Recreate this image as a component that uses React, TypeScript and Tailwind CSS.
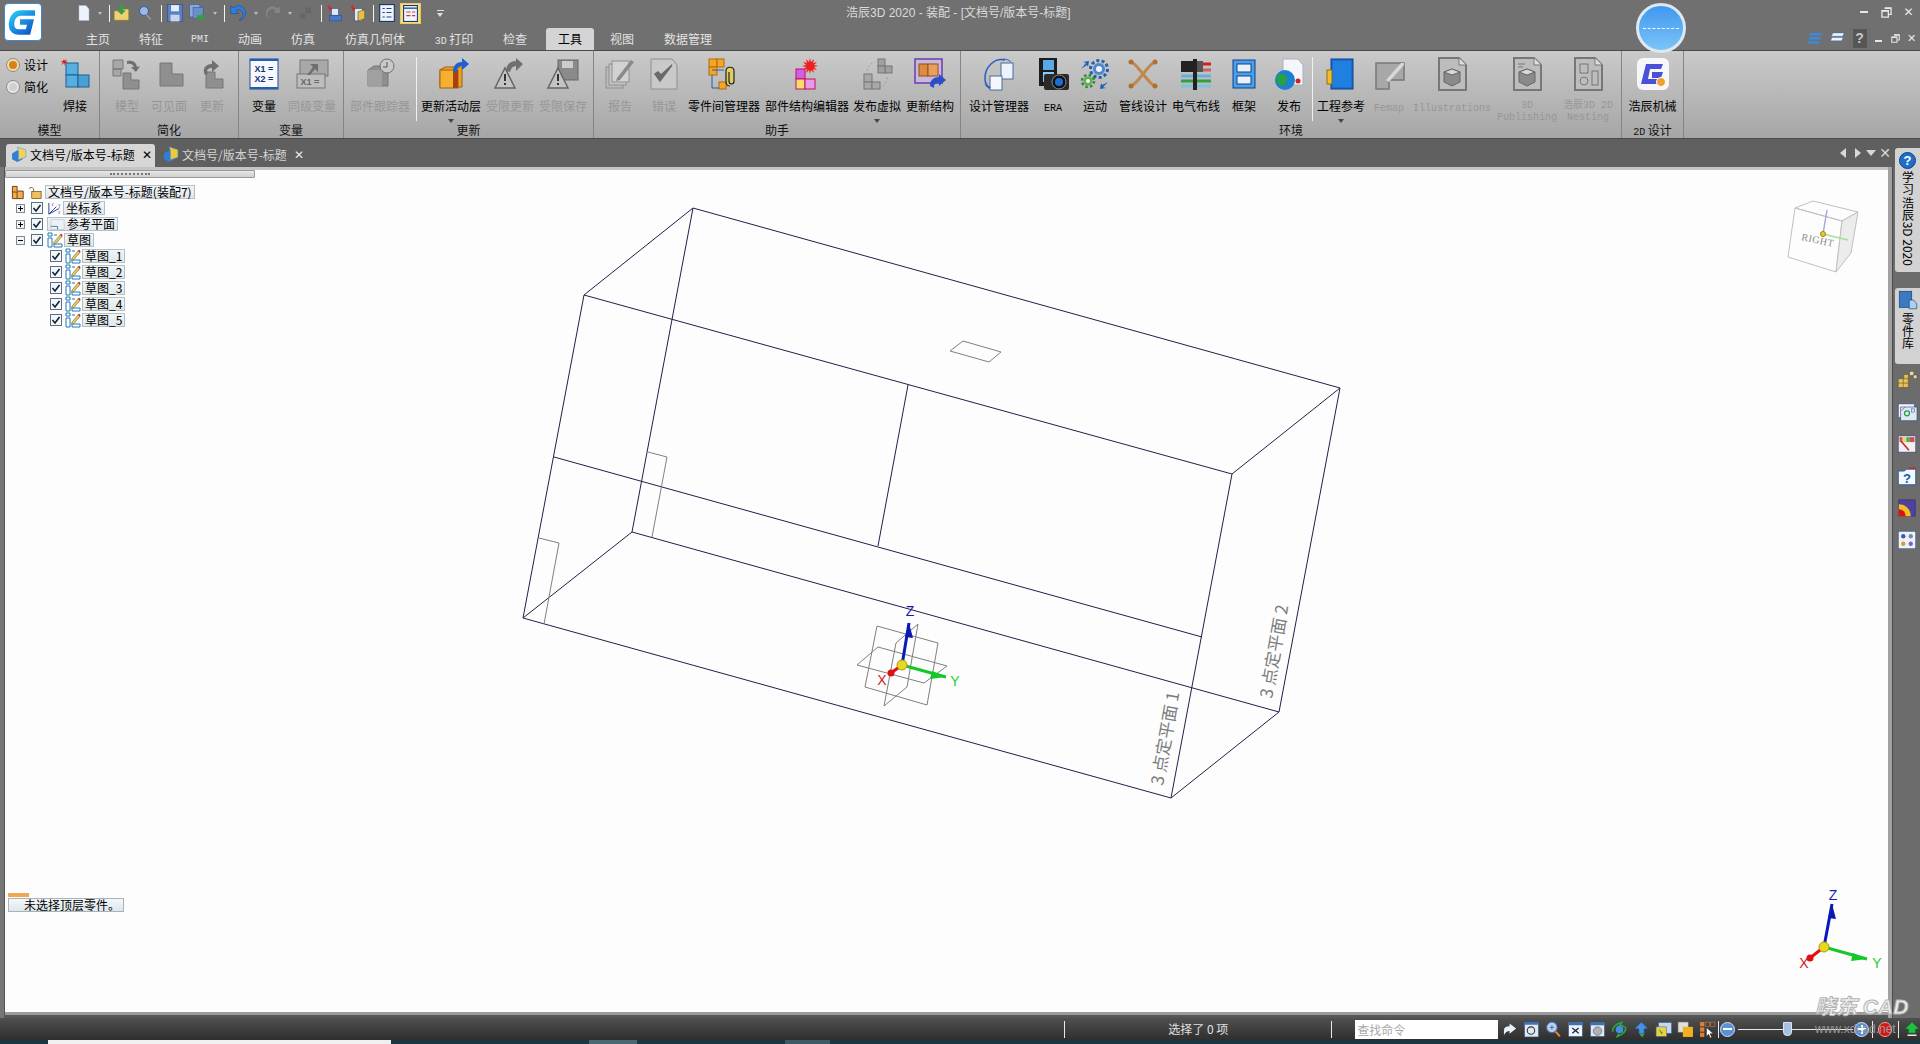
import React from 'react';

const CJK = "font-['Noto_Sans_CJK_SC',sans-serif]";
const LATIN = "font-['Liberation_Mono','Noto_Sans_CJK_SC',monospace]";

const I: React.FC<{ s?: number; children: React.ReactNode }> = ({ s = 32, children }) => (
  <svg width={s} height={s} viewBox="0 0 32 32" className="shrink-0 overflow-visible">{children}</svg>
);

const G1 = '#8f8f8f';
const G2 = '#777777';

/* ribbon icons */
const Weld = () => (
  <I>
    <path d="M5 1l1 2 2-2-1 3 2 1-3 0 0 3-1-3-3 2 2-3-3-1 3 0z" fill="#e01818" />
    <rect x="7" y="5" width="12" height="12" fill="#58aee0" stroke="#1a5f95" />
    <rect x="7" y="17" width="12" height="12" fill="#58aee0" stroke="#1a5f95" />
    <rect x="19" y="17" width="11" height="12" fill="#4a9fd4" stroke="#1a5f95" />
  </I>
);
const ModelI = () => (
  <I>
    <path d="M2 2h10v9h-10zM2 11h8v7h-8z" fill="#a8a8a8" stroke={G2} />
    <path d="M12 15h8v7h8v9h-16z" fill={G1} stroke={G2} />
    <path d="M16 3c6-1 9 1 10 6l3-1-4 6-5-5 3 0c-1-3-4-4-7-3z" fill="#6f6f6f" />
  </I>
);
const Visible = () => <I><path d="M7 5h12v11h11v12H7z" fill={G1} stroke={G2} /></I>;
const UpdateI = () => (
  <I>
    <path d="M10 14h9v7h8v9H10z" fill={G1} stroke={G2} />
    <path d="M9 17c-3-6 0-11 7-11V2l7 6-7 6v-4c-4 0-6 2-4 6z" fill="#6f6f6f" />
  </I>
);
const Variable = () => (
  <I>
    <rect x="2" y="1" width="28" height="30" fill="#f7f9fd" stroke="#1f4f9a" />
    <rect x="2" y="1" width="28" height="2" fill="#1f5fb0" />
    <rect x="2" y="29" width="28" height="2" fill="#1f5fb0" />
    <text x="16" y="14" textAnchor="middle" fontSize="9" fontWeight="bold" fill="#12327a" fontFamily="Liberation Sans">X1 =</text>
    <text x="16" y="24" textAnchor="middle" fontSize="9" fontWeight="bold" fill="#12327a" fontFamily="Liberation Sans">X2 =</text>
  </I>
);
const Sibling = () => (
  <I>
    <rect x="4" y="2" width="28" height="16" fill="#a8a8a8" stroke={G2} />
    <rect x="1" y="16" width="28" height="14" fill="#bdbdbd" stroke={G2} />
    <path d="M14 6h8v8l-3-3-5 6h-3l6-8z" fill="#6f6f6f" />
    <text x="14" y="27" textAnchor="middle" fontSize="9" fontWeight="bold" fill="#666" fontFamily="Liberation Sans">X1 =</text>
  </I>
);
const Tracker = () => (
  <I>
    <path d="M4 12l6-4h14v20H4z" fill={G1} stroke={G2} />
    <path d="M4 12h14v17H4z" fill="#a0a0a0" />
    <circle cx="23" cy="8" r="7" fill="#c9c9c9" stroke="#6f6f6f" />
    <path d="M23 4v5h-4" stroke="#555" fill="none" />
  </I>
);
const ActiveLayer = () => (
  <I>
    <path d="M5 12l5-3h17v20H5z" fill="#f0a020" stroke="#a06010" />
    <rect x="5" y="12" width="18" height="18" fill="#f6b030" stroke="#a06010" />
    <rect x="18" y="12" width="5" height="18" fill="#a84010" />
    <path d="M18 14c0-7 4-10 9-10V0l7 6-7 6V8c-3 0-5 2-5 6z" fill="#1f5fd0" />
  </I>
);
const Warn = ({ save }: { save?: boolean }) => (
  <I>
    {save ? (
      <g><rect x="11" y="2" width="20" height="20" fill="#8a8a8a" stroke="#666" /><rect x="15" y="3" width="11" height="7" fill="#ccc" /></g>
    ) : (
      <path d="M12 13c0-6 4-10 10-10V0l7 6-7 7V8c-3 0-5 2-6 6z" fill="#707070" />
    )}
    <path d="M11 10L21 30H1z" fill="#c4c4c4" stroke="#666" strokeWidth="1.5" />
    <rect x="10" y="16" width="2" height="7" fill="#333" />
    <rect x="10" y="25" width="2" height="2" fill="#333" />
  </I>
);
const Report = () => (
  <I>
    <rect x="2" y="9" width="17" height="21" fill="#bbb" stroke={G1} />
    <rect x="5" y="6" width="17" height="21" fill="#c6c6c6" stroke={G1} />
    <rect x="8" y="3" width="17" height="21" fill="#d2d2d2" stroke={G1} />
    <path d="M13 20l14-18 3 2-14 18-4 1z" fill="#8a8a8a" />
  </I>
);
const ErrorI = () => (
  <I>
    <path d="M3 1h21l5 6v24H3z" fill="#c9c9c9" stroke={G1} />
    <path d="M7 16l5 7 12-16-11 10-3-3z" fill="#6a6a6a" stroke="#6a6a6a" strokeWidth="1.5" />
  </I>
);
const PartMgr = () => (
  <I>
    <rect x="1" y="1" width="8" height="8" fill="#f5a623" stroke="#b06a10" />
    <rect x="9" y="1" width="7" height="8" fill="#f5a623" stroke="#b06a10" />
    <rect x="1" y="9" width="8" height="8" fill="#f5a623" stroke="#b06a10" />
    <rect x="11" y="24" width="7" height="7" fill="#f5a623" stroke="#b06a10" />
    <path d="M4 17v13h7M4 12h12" stroke="#1f5fb0" fill="none" />
    <path d="M22 28c-4 0-4-3-4-6v-9c0-5 8-5 8 0v10c0 4-5 4-5 0v-9" stroke="#222" strokeWidth="1.2" fill="#ead33a" fillOpacity=".75" />
  </I>
);
const Editor = () => (
  <I>
    <rect x="5" y="11" width="9" height="10" fill="#d05ee8" stroke="#c01060" />
    <rect x="5" y="21" width="9" height="10" fill="#f7e06a" stroke="#c01060" />
    <rect x="14" y="21" width="10" height="10" fill="#e89ae8" stroke="#c01060" />
    <path d="M19 0l1 4 3-3-1 4 4-1-3 3 4 1-4 1 3 3-4-1 1 4-3-3-1 4-1-4-3 3 1-4-4 1 3-3-4-1 4-1-3-3 4 1-1-4 3 3z" fill="#f02020" />
  </I>
);
const PublishVirtual = () => (
  <I>
    <rect x="17" y="1" width="7" height="7" fill="#a0a0a0" stroke={G2} />
    <rect x="24" y="8" width="7" height="7" fill="#a0a0a0" stroke={G2} />
    <rect x="17" y="8" width="7" height="7" fill="#a0a0a0" stroke={G2} />
    <rect x="3" y="16" width="8" height="8" fill="#a8a8a8" stroke={G2} />
    <rect x="3" y="24" width="8" height="7" fill="#a8a8a8" stroke={G2} />
    <rect x="11" y="24" width="8" height="7" fill="#a8a8a8" stroke={G2} />
    <path d="M6 13c1-5 4-8 8-9M26 19c0 5-2 8-5 10" stroke="#a0a0a0" strokeDasharray="2 2" fill="none" />
  </I>
);
const UpdateStruct = () => (
  <I>
    <rect x="1" y="1" width="27" height="24" fill="#c9b9d9" stroke="#6a3cb0" strokeWidth="1.5" />
    <rect x="5" y="6" width="9" height="12" fill="#e08a40" stroke="#905020" />
    <rect x="14" y="6" width="10" height="12" fill="#e8a060" stroke="#905020" />
    <path d="M16 28c0-6 4-9 9-9v-3l7 6-7 6v-3c-3 0-5 0-5 5z" fill="#2a50c8" />
  </I>
);
const DesignMgr = () => (
  <I>
    <rect x="18" y="5" width="12" height="16" fill="#eef3fb" stroke="#4a6a9a" />
    <rect x="7" y="18" width="12" height="14" fill="#f4f7fc" stroke="#4a6a9a" />
    <path d="M22 2C12-1 1 9 2 22c0 3 2 5 3 7" stroke="#2a5fc0" strokeWidth="1.5" fill="none" />
    <path d="M20 1c3 0 6 1 8 3" stroke="#2a5fc0" fill="none" />
    <path d="M1 26l7 3-2 2z" fill="#2a5fc0" />
  </I>
);
const Era = () => (
  <I>
    <rect x="2" y="0" width="18" height="28" fill="#1c1c1c" />
    <rect x="6" y="2" width="11" height="10" fill="#5aa8e8" />
    <rect x="6" y="14" width="11" height="10" fill="#8fc8f0" />
    <rect x="7" y="16" width="25" height="16" rx="2" fill="#2a2a2a" />
    <circle cx="22" cy="24" r="7" fill="#111" stroke="#888" />
    <circle cx="22" cy="24" r="4" fill="#1a70d0" />
  </I>
);
const Motion = () => (
  <I>
    <circle cx="20" cy="11" r="8.5" fill="none" stroke="#1f5fb0" strokeWidth="3" strokeDasharray="3 2.3" />
    <circle cx="20" cy="11" r="6" fill="#4f86cc" />
    <circle cx="20" cy="11" r="3" fill="#f0f4fa" />
    <circle cx="9" cy="23" r="6" fill="none" stroke="#2f8a30" strokeWidth="2.5" strokeDasharray="2.5 2.2" />
    <circle cx="9" cy="23" r="4.5" fill="#63ad55" />
    <circle cx="9" cy="23" r="2" fill="#f0f4fa" />
    <path d="M2 11l5-6-3-1 6-1-1 6-1-2zM29 24l-5 5 3 1-6 1 1-6 1 2z" fill="#1f5fb0" />
  </I>
);
const Pipe = () => (
  <I>
    <path d="M4 4C10 5 22 27 28 28M28 4C22 5 10 27 4 28" stroke="#c08850" strokeWidth="3" fill="none" />
    <circle cx="4" cy="4" r="2.5" fill="#b06f30" /><circle cx="28" cy="4" r="2.5" fill="#b06f30" />
    <circle cx="4" cy="28" r="2.5" fill="#b06f30" /><circle cx="28" cy="28" r="2.5" fill="#b06f30" />
  </I>
);
const Electric = () => (
  <I>
    <path d="M1 6h30" stroke="#d02020" strokeWidth="3" />
    <path d="M1 12h30" stroke="#d06060" strokeWidth="3" />
    <path d="M1 18h30" stroke="#60b0e0" strokeWidth="3" />
    <path d="M1 23h30" stroke="#30a040" strokeWidth="3" />
    <path d="M1 28h30" stroke="#80c0e0" strokeWidth="3" />
    <rect x="1" y="3" width="12" height="11" fill="#222" />
    <rect x="13" y="1" width="4" height="31" fill="#222" />
    <rect x="17" y="3" width="6" height="11" fill="#555" />
  </I>
);
const Frame = () => (
  <I>
    <rect x="5" y="2" width="22" height="28" fill="#4aa0e8" stroke="#10408a" />
    <rect x="9" y="6" width="14" height="8" fill="#e8f2fb" stroke="#10408a" />
    <rect x="9" y="18" width="14" height="8" fill="#e8f2fb" stroke="#10408a" />
  </I>
);
const PublishI = () => (
  <I>
    <path d="M10 1h15l5 6v20H10z" fill="#f4f6fa" stroke="#a8b0c0" />
    <circle cx="12" cy="22" r="10" fill="#1c7fd0" />
    <path d="M5 17c4-3 8 0 9 3s-3 9-7 8c-3-3-4-7-2-11z" fill="#2aa040" />
    <circle cx="25" cy="23" r="2.5" fill="#d02020" />
  </I>
);
const EngRef = () => (
  <I>
    <rect x="6" y="1" width="22" height="30" fill="#1c6fd0" stroke="#0c3f8a" />
    <rect x="8" y="3" width="18" height="26" fill="#1f80e0" />
    <rect x="2" y="12" width="5" height="14" fill="#e8c030" stroke="#907010" />
  </I>
);
const Femap = () => (
  <I>
    <path d="M3 5h28v17H16v9H3z" fill="#a8a8a8" stroke={G2} strokeWidth="1.5" />
    <path d="M13 22L28 5h3v2L16 24z" fill="#d8d8d8" />
  </I>
);
const Doc = ({ children }: { children?: React.ReactNode }) => (
  <I>
    <path d="M3 0h20l7 7v25H3z" fill="#bdbdbd" stroke={G2} strokeWidth="2" />
    <path d="M23 0v7h7" fill="#e0e0e0" stroke={G2} />
    {children}
  </I>
);
const Cube3 = (
  <g>
    <path d="M16 11l8 3v10l-8 4-8-4V14z" fill="#8a8a8a" stroke="#666" />
    <path d="M8 14l8 3 8-3-8-3z" fill="#d8d8d8" stroke="#666" />
  </g>
);
const Mech = () => (
  <I>
    <rect x="0" y="0" width="32" height="32" rx="6" fill="#f7f7fb" />
    <path d="M9 6h17l-2 5H13l-2 10h10l-1 5H4z" fill="#4a50d8" />
    <path d="M15 14h11l-2 6h-9z" fill="#4a50d8" />
    <circle cx="24" cy="24" r="4.5" fill="#f0a030" stroke="#fff" />
  </I>
);

type Item = { w: string; label?: React.ReactNode; icon?: React.ReactNode; dim?: boolean; caret?: boolean; sep?: boolean; two?: boolean };

const Mono: React.FC<{ children: React.ReactNode }> = ({ children }) => (
  <span className={`${LATIN} text-[10px]`}>{children}</span>
);

const groups: { w: string; pl: string; label: React.ReactNode; items: Item[]; radio?: boolean }[] = [
  {
    w: 'w-[100px]', pl: 'pl-[55px]', label: '模型', radio: true,
    items: [{ w: 'w-[40px]', label: '焊接', icon: <Weld /> }],
  },
  {
    w: 'w-[139px]', pl: 'pl-[6px]', label: '简化',
    items: [
      { w: 'w-[42px]', label: '模型', icon: <ModelI />, dim: true },
      { w: 'w-[42px]', label: '可见面', icon: <Visible />, dim: true },
      { w: 'w-[44px]', label: '更新', icon: <UpdateI />, dim: true },
    ],
  },
  {
    w: 'w-[105px]', pl: 'pl-[2px]', label: '变量',
    items: [
      { w: 'w-[46px]', label: '变量', icon: <Variable /> },
      { w: 'w-[50px]', label: '同级变量', icon: <Sibling />, dim: true },
    ],
  },
  {
    w: 'w-[250px]', pl: 'pl-0', label: '更新',
    items: [
      { w: 'w-[72px]', label: '部件跟踪器', icon: <Tracker />, dim: true },
      { w: 'w-[2px]', sep: true },
      { w: 'w-[66px]', label: '更新活动层', icon: <ActiveLayer />, caret: true },
      { w: 'w-[52px]', label: '受限更新', icon: <Warn />, dim: true },
      { w: 'w-[54px]', label: '受限保存', icon: <Warn save />, dim: true },
    ],
  },
  {
    w: 'w-[367px]', pl: 'pl-[6px]', label: '助手',
    items: [
      { w: 'w-[40px]', label: '报告', icon: <Report />, dim: true },
      { w: 'w-[48px]', label: '错误', icon: <ErrorI />, dim: true },
      { w: 'w-[72px]', label: '零件间管理器', icon: <PartMgr /> },
      { w: 'w-[94px]', label: '部件结构编辑器', icon: <Editor /> },
      { w: 'w-[46px]', label: '发布虚拟', icon: <PublishVirtual />, caret: true },
      { w: 'w-[60px]', label: '更新结构', icon: <UpdateStruct /> },
    ],
  },
  {
    w: 'w-[661px]', pl: 'pl-[5px]', label: '环境',
    items: [
      { w: 'w-[66px]', label: '设计管理器', icon: <DesignMgr /> },
      { w: 'w-[42px]', label: <Mono>ERA</Mono>, icon: <Era /> },
      { w: 'w-[42px]', label: '运动', icon: <Motion /> },
      { w: 'w-[54px]', label: '管线设计', icon: <Pipe /> },
      { w: 'w-[52px]', label: '电气布线', icon: <Electric /> },
      { w: 'w-[44px]', label: '框架', icon: <Frame /> },
      { w: 'w-[46px]', label: '发布', icon: <PublishI /> },
      { w: 'w-[2px]', sep: true },
      { w: 'w-[54px]', label: '工程参考', icon: <EngRef />, caret: true },
      { w: 'w-[42px]', label: <Mono>Femap</Mono>, icon: <Femap />, dim: true },
      { w: 'w-[84px]', label: <Mono>Illustrations</Mono>, icon: <Doc>{Cube3}</Doc>, dim: true },
      {
        w: 'w-[66px]', two: true, dim: true,
        label: <Mono>3D<br />Publishing</Mono>,
        icon: <Doc>{Cube3}<path d="M7 6h7M7 9h5" stroke="#777" /></Doc>,
      },
      {
        w: 'w-[56px]', two: true, dim: true,
        label: <span>浩辰<Mono>3D 2D</Mono><br /><Mono>Nesting</Mono></span>,
        icon: <Doc><rect x="8" y="6" width="8" height="9" fill="none" stroke="#777" /><circle cx="12" cy="23" r="4" fill="none" stroke="#777" /><rect x="20" y="13" width="6" height="14" fill="none" stroke="#777" /></Doc>,
      },
    ],
  },
  {
    w: 'w-[62px]', pl: 'pl-0', label: <span><Mono>2D</Mono> 设计</span>,
    items: [{ w: 'w-[62px]', label: '浩辰机械', icon: <Mech /> }],
  },
];

const Caret = () => <div className="w-0 h-0 border-x-[3px] border-x-transparent border-t-[4px] border-t-[#444]" />;

const RibbonItem: React.FC<{ item: Item }> = ({ item }) => {
  if (item.sep) {
    return (
      <div className={`${item.w} h-[72px] flex items-start`}>
        <div className="mt-[6px] w-[1px] h-[64px] bg-[#f0f0f0]" />
      </div>
    );
  }
  return (
    <div className={`${item.w} flex flex-col items-center pt-[7px]`}>
      <div className="h-[32px] flex items-center justify-center">{item.icon}</div>
      <div
        className={`whitespace-nowrap text-center ${item.two ? 'mt-[9px] text-[10px] leading-[10px] h-[17px]' : 'mt-[8px] text-[12px] leading-[16px] h-[16px]'} ${item.dim ? 'text-[#979797]' : 'text-black'}`}
      >
        {item.label}
      </div>
      {item.caret && <div className="mt-[5px]"><Caret /></div>}
    </div>
  );
};

const Radio = ({ on }: { on?: boolean }) => (
  <div className={`w-[14px] h-[14px] rounded-full border border-[#8a8a8a] flex items-center justify-center ${on ? 'bg-[#f2dca0]' : 'bg-[#e6e6e6]'}`}>
    <div className={`w-[8px] h-[8px] rounded-full ${on ? 'bg-[#d8801c]' : 'bg-[#d0d0d0]'}`} />
  </div>
);

const Ribbon = () => (
  <div className="h-[88px] flex bg-linear-to-b from-[#cacaca] to-[#a6a6a6] border-t border-[#4a4a4a]">
    {groups.map((g, i) => (
      <div key={i} className={`${g.w} shrink-0 relative flex flex-col border-r border-[#858585]`}>
        <div className={`h-[71px] flex ${g.pl}`}>
          {g.radio && (
            <div className="absolute left-[6px] top-[6px] flex flex-col gap-[6px] text-[12px] leading-[16px] text-black">
              <div className="flex items-center gap-[4px]"><Radio on />设计</div>
              <div className="flex items-center gap-[4px]"><Radio />简化</div>
            </div>
          )}
          {g.items.map((it, j) => <RibbonItem key={j} item={it} />)}
        </div>
        <div className="h-[16px] leading-[16px] text-center text-[12px] text-[#111]">{g.label}</div>
      </div>
    ))}
  </div>
);

/* quick access toolbar */
const QSep = () => <div className="w-[1px] h-[17px] bg-[#f2f2f2]" />;
const QCaret = () => <div className="w-0 h-0 border-x-[2px] border-x-transparent border-t-[3px] border-t-[#c0c0c0]" />;

const qat: [string, React.ReactNode][] = [
  ['w-[20px]', <I s={16} key="n"><path d="M6 1h14l6 7v23H6z" fill="#eef2fa" stroke="#a8b4d0" /></I>],
  ['w-[12px]', <QCaret key="c1" />],
  ['w-[6px]', <QSep key="s1" />],
  ['w-[20px]', <I s={18} key="o"><path d="M2 12h10l2-3h14v20H2z" fill="#f0d070" stroke="#8a7020" /><path d="M12 1h6v10h5l-8 8-8-8h5z" fill="#30a040" /></I>],
  ['w-[26px]', <I s={16} key="f"><circle cx="14" cy="12" r="9" fill="#9ab8e8" stroke="#3a5a9a" strokeWidth="2" /><path d="M19 19l8 10" stroke="#999" strokeWidth="3" /></I>],
  ['w-[6px]', <QSep key="s2" />],
  ['w-[22px]', <I s={18} key="sv"><rect x="3" y="1" width="26" height="30" fill="#5a80c8" stroke="#2a4a8a" /><rect x="9" y="2" width="14" height="11" fill="#e8eef8" /><rect x="8" y="19" width="16" height="12" fill="#c8d4e8" /></I>],
  ['w-[22px]', <I s={18} key="sa"><rect x="3" y="1" width="18" height="22" fill="#8aa8d8" stroke="#3a5a9a" /><rect x="9" y="6" width="18" height="20" fill="#6a90c8" stroke="#3a5a9a" /><path d="M16 20h8v-4l7 7-7 7v-4h-8z" fill="#30a040" /></I>],
  ['w-[14px]', <QCaret key="c2" />],
  ['w-[4px]', <QSep key="s3" />],
  ['w-[24px]', <I s={18} key="u"><path d="M3 3v14h14l-5-5c5-4 11-2 13 4 1 4-1 9-7 13 10-2 13-10 11-16C26 3 16 0 9 7z" fill="#2f7fe0" stroke="#124a9a" /></I>],
  ['w-[12px]', <QCaret key="c3" />],
  ['w-[22px]', <I s={18} key="r"><path d="M29 3v14H15l5-5c-5-4-11-2-13 4-1 4 1 9 7 13C4 27 1 19 3 13 6 3 16 0 23 7z" fill="#858585" stroke="#666" /></I>],
  ['w-[12px]', <QCaret key="c4" />],
  ['w-[20px]', <I s={16} key="l"><rect x="4" y="17" width="11" height="11" fill="#666" /><rect x="15" y="5" width="11" height="11" fill="#666" /></I>],
  ['w-[10px]', <QSep key="s4" />],
  ['w-[18px]', <I s={18} key="a"><path d="M1 1l3 4 3-4 0 5 5 0-4 3 4 3-5 0z" fill="#e02020" /><rect x="10" y="8" width="12" height="12" fill="#dfe8f8" stroke="#2a4a8a" /><rect x="6" y="20" width="22" height="10" fill="#4a78c8" stroke="#2a4a8a" /></I>],
  ['w-[28px]', <I s={18} key="b"><path d="M1 1l3 4 3-4 0 5 5 0-4 3 4 3-5 0z" fill="#e02020" /><rect x="10" y="8" width="14" height="22" fill="#dfe8f8" stroke="#444" /><path d="M16 14l12-4v16l-12 4z" fill="#e8c040" stroke="#444" /></I>],
  ['w-[2px]', <QSep key="s5" />],
  ['w-[26px]', <I s={18} key="t"><rect x="3" y="1" width="26" height="30" fill="#f0f4fa" stroke="#123a6a" strokeWidth="2" /><path d="M8 8h4M15 8h9M8 15h4M15 15h9M8 23h4M15 23h9" stroke="#1a4a8a" strokeWidth="2" /></I>],
  ['w-[21px]', (
    <div key="h" className="w-[21px] h-[21px] border border-[#e8c860] bg-[#f7dc86] flex items-center justify-center">
      <I s={17}><rect x="3" y="1" width="26" height="30" fill="#f0f4fa" stroke="#123a6a" strokeWidth="2" /><path d="M3 6h26" stroke="#3a6ab0" strokeWidth="3" /><path d="M8 13h8M19 13h6M8 20h8M19 20h6" stroke="#c04040" strokeWidth="2" /></I>
    </div>
  )],
  ['w-[38px]', (
    <div key="m" className="flex flex-col items-center gap-[2px]">
      <div className="w-[7px] h-[1px] bg-[#e0e0e0]" />
      <div className="w-0 h-0 border-x-[3px] border-x-transparent border-t-[4px] border-t-[#e0e0e0]" />
    </div>
  )],
];

const tabs: [string, React.ReactNode, boolean?][] = [
  ['w-[48px]', '主页'],
  ['w-[58px]', '特征'],
  ['w-[40px]', <Mono key="p">PMI</Mono>],
  ['w-[60px]', '动画'],
  ['w-[46px]', '仿真'],
  ['w-[98px]', '仿真几何体'],
  ['w-[60px]', <span key="d"><Mono>3D</Mono> 打印</span>],
  ['w-[62px]', '检查'],
  ['w-[48px]', '工具', true],
  ['w-[56px]', '视图'],
  ['w-[76px]', '数据管理'],
];

const Restore = ({ s, c = '#e8e8e8' }: { s: number; c?: string }) => (
  <svg width={s} height={s} viewBox="0 0 12 12">
    <path d="M4 1h7v7H8M1 4h7v7H1z" fill="none" stroke={c} strokeWidth="1.4" />
    <path d="M4 1.5h7M1 4.5h7" stroke={c} strokeWidth="1.4" />
  </svg>
);

const TitleBar = () => (
  <div className="h-[50px] relative flex bg-[#707070]">
    <div className="w-[74px] shrink-0 pl-[4px] pt-[3px]">
      <div className="w-[38px] h-[38px] rounded-[4px] bg-white border border-[#3a8ad8] flex items-center justify-center">
        <svg width="32" height="32" viewBox="0 0 32 32">
          <defs>
            <linearGradient id="logoG" x1="0" y1="0" x2="1" y2="1">
              <stop offset="0" stopColor="#27c8f5" />
              <stop offset="1" stopColor="#0f4fc8" />
            </linearGradient>
          </defs>
          <path d="M28 7H14C8 7 5 12 4.500 17 4 23 7 26 12 26H21L23.500 16H13" stroke="url(#logoG)" strokeWidth="5.500" fill="none" />
        </svg>
      </div>
    </div>
    <div className="flex-1 flex flex-col">
      <div className="h-[28px] flex items-start">
        <div className="flex items-center h-[26px]">
          {qat.map(([w, n], i) => (
            <div key={i} className={`${w} h-[26px] flex items-center justify-center`}>{n}</div>
          ))}
        </div>
        <div className="ml-auto flex items-center h-[24px] text-[#e8e8e8]">
          <div className="w-[22px] flex justify-center"><div className="w-[8px] h-[2px] bg-[#e8e8e8]" /></div>
          <div className="w-[22px] flex justify-center"><Restore s={11} /></div>
          <div className="w-[23px] text-center text-[12px] font-bold leading-[14px] font-['Liberation_Sans','DejaVu_Sans',sans-serif]">✕</div>
        </div>
      </div>
      <div className="h-[22px] flex items-end">
        {tabs.map(([w, t, active], i) => (
          <div
            key={i}
            className={`${w} h-[22px] flex items-center justify-center text-[12px] ${active ? 'bg-[#d4d4d4] text-black rounded-t-[3px]' : 'text-[#e2e2e2]'}`}
          >
            {t}
          </div>
        ))}
        <div className="ml-auto flex items-center h-[22px] pb-[2px] text-[#e8e8e8]">
          <div className="w-[22px] flex justify-center"><I s={15}><path d="M6 4h24l-3 5H3zM4 13h24l-3 5H1zM2 22h24l-3 5H0z" fill="#3a8ae0" /></I></div>
          <div className="w-[23px] flex justify-center"><I s={15}><path d="M6 4h24l-3 7H3zM4 14h24l-3 7H1z" fill="#f2f6fc" stroke="#2f6fb8" /></I></div>
          <div className="w-[21px] flex justify-center"><div className="w-[14px] h-[19px] bg-[#565656] text-center text-[14px] leading-[19px] text-[#c8c8c8] font-bold font-['Liberation_Sans',sans-serif]">?</div></div>
          <div className="w-[17px] flex justify-center pt-[6px]"><div className="w-[7px] h-[2px] bg-[#e8e8e8]" /></div>
          <div className="w-[16px] flex justify-center"><Restore s={9} /></div>
          <div className="w-[17px] text-center text-[11px] leading-[12px] font-['Liberation_Sans','DejaVu_Sans',sans-serif]">✕</div>
        </div>
      </div>
    </div>
    <div className="absolute left-[846px] top-[5px] text-[12px] leading-[16px] text-[#dadada] whitespace-nowrap font-['Liberation_Sans','Noto_Sans_CJK_SC',sans-serif]">
      浩辰3D 2020 - 装配 - [文档号/版本号-标题]
    </div>
  </div>
);

const DocIcon = ({ alt }: { alt?: boolean }) => (
  <I s={17}>
    <path d="M2 14l10-6 10 5v12l-10 5-10-5z" fill="#2f7fd8" />
    <path d="M12 2l16 5v14l-14 5V10z" fill={alt ? '#f2c83a' : '#f0d060'} stroke="#4a9ad8" />
  </I>
);

const TabStrip = () => (
  <div className="h-[29px] flex items-end bg-[#5f5f5f] pl-[6px] border-t border-[#4a4a4a] relative">
    <div className="w-[149px] h-[23px] pb-[2px] rounded-t-[3px] bg-[#d6d6d6] flex items-center pl-[5px] text-[12px] text-black">
      <DocIcon />
      <span className="ml-[2px] whitespace-nowrap">文档号/版本号-标题</span>
      <span className="ml-[7px] text-[12px] font-bold font-['Liberation_Sans','DejaVu_Sans',sans-serif]">✕</span>
    </div>
    <div className="h-[23px] pb-[2px] flex items-center pl-[8px] text-[12px] text-[#d4d4d4]">
      <DocIcon alt />
      <span className="ml-[2px] whitespace-nowrap">文档号/版本号-标题</span>
      <span className="ml-[7px] font-bold text-[#e8e8e8] font-['Liberation_Sans','DejaVu_Sans',sans-serif]">✕</span>
    </div>
    <div className="ml-auto mr-[28px] h-[23px] flex items-center pb-[6px] text-[#d8d8d8]">
      <div className="w-0 h-0 border-y-[5px] border-y-transparent border-r-[6px] border-r-[#d8d8d8]" />
      <div className="ml-[9px] w-0 h-0 border-y-[5px] border-y-transparent border-l-[6px] border-l-[#d8d8d8]" />
      <div className="ml-[5px] w-0 h-0 border-x-[5px] border-x-transparent border-t-[6px] border-t-[#d8d8d8]" />
      <span className="ml-[2px] w-[14px] text-center text-[14px] font-bold leading-[14px] font-['Liberation_Sans','DejaVu_Sans',sans-serif]">✕</span>
    </div>
  </div>
);

/* tree */
const Check = () => (
  <div className="w-[12px] h-[12px] border border-[#5a7080] bg-[#f4f7f9] flex items-center justify-center">
    <svg width="10" height="10" viewBox="0 0 10 10"><path d="M1.5 5l2.5 3 4.5-6" stroke="#123" strokeWidth="1.6" fill="none" /></svg>
  </div>
);
const Expander = ({ minus }: { minus?: boolean }) => (
  <div className="w-[9px] h-[9px] border border-[#7a8a96] bg-[#f0f2f4] relative">
    <div className="absolute left-[1px] top-[3px] w-[5px] h-[1px] bg-black" />
    {!minus && <div className="absolute left-[3px] top-[1px] w-[1px] h-[5px] bg-black" />}
  </div>
);
const SketchIco = () => (
  <I s={16}>
    <path d="M2 12h8v18H2zM14 24h16v6H14zM14 6h6M2 2h8v6H2z" fill="none" stroke="#1f7ab8" strokeWidth="2" />
    <path d="M14 20l12-14 4 3-12 14-5 1z" fill="#e8c850" stroke="#555" />
    <path d="M26 6l2-3 3 3-1 3z" fill="#d02020" />
  </I>
);
const Lbl: React.FC<{ children: React.ReactNode }> = ({ children }) => (
  <div className="h-[14px] px-[2px] flex items-center whitespace-nowrap text-[12px] leading-[14px] text-black bg-linear-to-b from-[#f2f5f7] to-[#e0e6ea] border border-[#b4c0c8]">
    {children}
  </div>
);

const Row: React.FC<{ children: React.ReactNode; pl: string }> = ({ children, pl }) => (
  <div className={`h-[16px] flex items-center ${pl}`}>{children}</div>
);

const Tree = () => (
  <div className="absolute left-0 top-0 flex flex-col">
    <div className="ml-0 w-[250px] h-[8px] rounded-[1px] bg-linear-to-b from-[#e8e8e8] to-[#cfcfcf] border border-[#9a9a9a] flex items-center justify-center">
      <div className="w-[40px] border-t-2 border-dotted border-[#777]" />
    </div>
    <div className="pt-[6px]">
      <Row pl="pl-[6px]">
        <I s={15}><path d="M3 3h10v10h13v16H3z" fill="#f0b050" stroke="#6a3a10" strokeWidth="2" /><path d="M3 15h10v14" stroke="#6a3a10" fill="none" strokeWidth="2" /></I>
        <div className="ml-[2px]"><I s={15}><rect x="8" y="14" width="20" height="15" fill="#f0c060" stroke="#6a4a10" strokeWidth="1.5" /><path d="M12 14V8a6 6 0 0 0-10 0" stroke="#666" strokeWidth="2" fill="none" /></I></div>
        <div className="ml-[2px]"><Lbl>文档号/版本号-标题(装配7)</Lbl></div>
      </Row>
      <Row pl="pl-[11px]">
        <Expander />
        <div className="ml-[6px]"><Check /></div>
        <div className="ml-[4px]">
          <I s={15}><path d="M4 28V4M4 28l22-12M4 28l16-16" stroke="#1f3a9a" strokeWidth="2" fill="none" /><text x="10" y="10" fontSize="9" fill="#c02020">z</text><text x="24" y="12" fontSize="9" fill="#1f3a9a">y</text><text x="24" y="28" fontSize="9" fill="#c02020">x</text></I>
        </div>
        <div className="ml-[1px]"><Lbl>坐标系</Lbl></div>
      </Row>
      <Row pl="pl-[11px]">
        <Expander />
        <div className="ml-[6px]"><Check /></div>
        <div className="ml-[4px]"><Lbl><span className="mr-[2px] flex"><I s={15}><rect x="2" y="6" width="28" height="20" fill="#eef2f6" stroke="#9ab0c0" /><path d="M2 20h14v6" stroke="#4a7a9a" fill="none" strokeWidth="2" /></I></span>参考平面</Lbl></div>
      </Row>
      <Row pl="pl-[11px]">
        <Expander minus />
        <div className="ml-[6px]"><Check /></div>
        <div className="ml-[4px]"><SketchIco /></div>
        <div className="ml-[1px]"><Lbl>草图</Lbl></div>
      </Row>
      {[1, 2, 3, 4, 5].map((n) => (
        <Row key={n} pl="pl-[45px]">
          <Check />
          <div className="ml-[3px]"><SketchIco /></div>
          <div className="ml-[1px]"><Lbl>草图_{n}</Lbl></div>
        </Row>
      ))}
    </div>
  </div>
);

/* model drawing */
const modelLines = [
  [693, 208, 1340, 388], [693, 208, 584, 295], [693, 208, 632, 532], [584, 295, 1232, 474],
  [584, 295, 523, 618], [523, 618, 632, 532], [523, 618, 1171, 798], [632, 532, 1279, 712],
  [1340, 388, 1232, 474], [1232, 474, 1171, 798], [1340, 388, 1279, 712], [1171, 798, 1279, 712],
  [554, 457, 1202, 637], [908, 385, 878, 546],
];

const Triad = ({ o, z, y, x, zl, yl, xl, w }: { o: number[]; z: number[]; y: number[]; x: number[]; zl: number[]; yl: number[]; xl: number[]; w: number }) => (
  <g>
    <line x1={o[0]} y1={o[1]} x2={z[0]} y2={z[1]} stroke="#0a1ab8" strokeWidth={w} />
    <path d={`M${z[0]} ${z[1]}l-4 14 8 1z`} fill="#0a1ab8" />
    <line x1={o[0]} y1={o[1]} x2={y[0]} y2={y[1]} stroke="#14c828" strokeWidth={w} />
    <path d={`M${y[0]} ${y[1]}l-14 -6 -2 8z`} fill="#14c828" />
    <line x1={o[0]} y1={o[1]} x2={x[0]} y2={x[1]} stroke="#e01010" strokeWidth={w} />
    <circle cx={x[0]} cy={x[1]} r="3.5" fill="#e01010" />
    <circle cx={o[0]} cy={o[1]} r="5" fill="#e8d820" stroke="#b09a10" />
    <g fontSize="14" fontFamily="Liberation Sans" textAnchor="middle">
      <text x={zl[0]} y={zl[1]} fill="#1a1ab0">Z</text>
      <text x={yl[0]} y={yl[1]} fill="#20d030">Y</text>
      <text x={xl[0]} y={xl[1]} fill="#d02020">X</text>
    </g>
  </g>
);

const ModelView = () => (
  <svg className="absolute inset-0" width="1883" height="842" viewBox="5 170 1883 842">
    <g stroke="#20204a" strokeWidth="1" fill="none">
      {modelLines.map((l, i) => <line key={i} x1={l[0]} y1={l[1]} x2={l[2]} y2={l[3]} />)}
    </g>
    <g stroke="#808080" strokeWidth="1" fill="none">
      <path d="M648 452L667 457L652 537" />
      <path d="M539 538L559 543L544 624" />
      <path d="M950 351L963 341L1001 352L989 362Z" />
      <path d="M877 626L938 643L927 705L865 687Z" />
      <path d="M918 624L907 687L884 706L896 643Z" />
      <path d="M857 665L878 647L947 666L924 683Z" />
    </g>
    <g fill="#7c7c7c" fontSize="17" fontFamily="Noto Sans CJK SC, sans-serif">
      <text transform="translate(1163 786) rotate(-80)">3 点定平面 1</text>
      <text transform="translate(1272 699) rotate(-80)">3 点定平面 2</text>
    </g>
    <Triad o={[902, 665]} z={[909, 623]} y={[946, 677]} x={[891, 673]} zl={[910, 616]} yl={[955, 686]} xl={[882, 685]} w={3} />
    <Triad o={[1824, 947]} z={[1832, 904]} y={[1867, 959]} x={[1810, 958]} zl={[1833, 900]} yl={[1877, 968]} xl={[1804, 968]} w={3} />
    {/* view cube */}
    <g stroke="#c0c0c0" fill="none">
      <path d="M1795 208L1813 201L1858 212L1842 221Z" />
      <path d="M1795 208L1842 221L1836 272L1788 257Z" />
      <path d="M1842 221L1858 212L1851 253L1836 272Z" fill="#ececec" />
    </g>
    <line x1="1823" y1="234" x2="1827" y2="210" stroke="#a8a8e0" strokeWidth="1.5" />
    <line x1="1823" y1="234" x2="1848" y2="240" stroke="#a0e0a0" strokeWidth="1.5" />
    <circle cx="1823" cy="234" r="2.5" fill="#e8d020" stroke="#a08010" />
    <text transform="translate(1801 240) rotate(12)" fontSize="10" fill="#8a8a8a" fontFamily="Liberation Serif" letterSpacing="0.5">RIGHT</text>
  </svg>
);

const sideIcons = [
  <I s={20} key="1"><path d="M2 14h9v-7h7v7h-7M2 14v14h16V14M10 14v14M2 21h16" fill="#e8c060" stroke="#6a5a20" /><rect x="20" y="2" width="7" height="7" fill="#d8d8c0" stroke="#6a5a20" /><rect x="26" y="8" width="6" height="6" fill="#d8d8c0" stroke="#6a5a20" /></I>,
  <I s={20} key="2"><rect x="2" y="3" width="26" height="22" fill="#f0f4fa" stroke="#2a4a8a" /><rect x="6" y="8" width="26" height="22" fill="#dfe8f4" stroke="#2a4a8a" /><path d="M7 14l6-6" stroke="#d02020" /><circle cx="16" cy="18" r="4" fill="none" stroke="#20a040" strokeWidth="2" /><rect x="23" y="11" width="5" height="5" fill="none" stroke="#4a6a9a" /></I>,
  <I s={20} key="3"><rect x="2" y="3" width="28" height="26" fill="#f0f0f0" stroke="#2a4a8a" /><path d="M4 5h5v8H4z" fill="#d05050" /><path d="M9 5h6v8H9z" fill="#e0e060" /><path d="M15 5h5v8h-5z" fill="#40b060" /><path d="M20 5h8v8h-8z" fill="#d05050" /><path d="M7 12l12 14" stroke="#d02020" strokeWidth="2.5" /></I>,
  <I s={20} key="4"><path d="M2 8h10l3-3h15v25H2z" fill="#f4f7fb" stroke="#1f5fa8" strokeWidth="1.5" /><rect x="19" y="2" width="11" height="3" fill="#c03030" /><text x="16" y="27" textAnchor="middle" fontSize="21" fontWeight="bold" fill="#1a5ab0" fontFamily="Liberation Sans">?</text></I>,
  <I s={20} key="5"><rect x="3" y="3" width="26" height="26" fill="#5040a0" stroke="#2a2a6a" /><path d="M3 10a19 19 0 0 1 19 19H3z" fill="#f0c020" /><path d="M3 18a11 11 0 0 1 11 11H3z" fill="#e01010" /></I>,
  <I s={20} key="6"><rect x="2" y="2" width="28" height="28" fill="#eef2f8" stroke="#2a5a9a" /><circle cx="10" cy="10" r="3.5" fill="#3a5ab0" /><circle cx="22" cy="10" r="3.5" fill="#7a8ab0" /><circle cx="10" cy="22" r="3.5" fill="#d0a030" /><circle cx="22" cy="22" r="3.5" fill="#7a60c0" /></I>,
];

const SidePanel = () => (
  <div className="w-[28px] shrink-0 bg-[#6c6c6c] border-l border-[#4a4a4a] flex flex-col items-end">
    <div className="-mt-[19px] w-[25px] h-[124px] rounded-l-[3px] bg-[#d2d2d2] flex flex-col items-center pt-[2px] relative">
      <div className="w-[17px] h-[17px] mt-[2px] rounded-full bg-[#1f6fc8] border border-[#0c3f8a] text-center text-[13px] leading-[15px] font-bold text-white font-['Liberation_Sans',sans-serif]">?</div>
      <div className="mt-[2px] text-[12px] leading-[14px] text-black [writing-mode:vertical-rl] whitespace-nowrap">学习 浩辰3D 2020</div>
    </div>
    <div className="mt-[16px] w-[25px] h-[76px] rounded-l-[3px] bg-[#d2d2d2] flex flex-col items-center pt-[2px]">
      <I s={20}><rect x="2" y="2" width="20" height="26" fill="#3a7ac0" stroke="#143a70" /><path d="M18 16h7l5 6v8H18z" fill="#a8d0f0" stroke="#143a70" /></I>
      <div className="mt-[3px] text-[12px] leading-[14px] text-black [writing-mode:vertical-rl]">零件库</div>
    </div>
    <div className="w-[26px] flex flex-col items-center gap-[12px] pt-[6px]">{sideIcons}</div>
  </div>
);

const statusIcons = [
  <I s={17} key="1"><rect x="3" y="2" width="26" height="28" fill="#dfe8f4" stroke="#2a5a9a" /><rect x="3" y="2" width="26" height="5" fill="#3a70b8" /><circle cx="15" cy="18" r="7" fill="none" stroke="#333" strokeWidth="2" /></I>,
  <I s={17} key="2"><circle cx="13" cy="12" r="10" fill="#b8d0ee" stroke="#3a6ab0" strokeWidth="2" /><path d="M9 12h8M13 8v8" stroke="#224" /><path d="M20 20l8 9" stroke="#e08a20" strokeWidth="4" /></I>,
  <I s={17} key="3"><rect x="3" y="3" width="26" height="26" fill="#eef3fa" stroke="#2a5a9a" /><rect x="3" y="3" width="26" height="5" fill="#3a70b8" /><path d="M10 13l12 10M22 13L10 23" stroke="#224" strokeWidth="2.5" /></I>,
  <I s={17} key="4"><rect x="3" y="3" width="26" height="26" fill="#dfe8f4" stroke="#2a5a9a" /><rect x="3" y="3" width="26" height="5" fill="#3a70b8" /><circle cx="16" cy="19" r="8" fill="#b0b0b0" stroke="#555" /></I>,
  <I s={17} key="5"><circle cx="16" cy="16" r="7" fill="#4a8ae0" /><path d="M3 20C3 10 12 5 20 3l-3 5c5 0 8 3 10 4" stroke="#20b040" strokeWidth="3" fill="none" /><path d="M28 12c0 10-8 14-16 17l3-5" stroke="#20b040" strokeWidth="3" fill="none" /></I>,
  <I s={17} key="6"><path d="M16 2l12 12-7 1v9H11v-9l-8-1z" fill="#4a90e0" stroke="#1a4a9a" /><path d="M12 24h10l-5 7z" fill="#30b040" /></I>,
  <I s={17} key="7"><rect x="7" y="3" width="24" height="20" fill="#c8d8ee" stroke="#3a6ab0" /><rect x="2" y="11" width="20" height="18" fill="#e8d040" stroke="#3a6ab0" /><path d="M7 15l8 8-3 1z" fill="#1a8a30" /></I>,
  <I s={17} key="8"><rect x="2" y="2" width="19" height="19" fill="#e0e0e0" stroke="#888" /><rect x="11" y="11" width="19" height="19" fill="#f0b020" /></I>,
  <I s={17} key="9"><rect x="2" y="2" width="8" height="8" fill="#e08030" /><rect x="12" y="2" width="8" height="8" fill="none" stroke="#e08030" /><rect x="22" y="2" width="8" height="8" fill="none" stroke="#e08030" /><rect x="2" y="12" width="8" height="8" fill="#e08030" /><rect x="2" y="22" width="8" height="8" fill="#e08030" /><path d="M14 12v17l4-4 3 7 3-1-3-7h6z" fill="#fff" stroke="#222" /></I>,
];

const Bar = () => <div className="w-[1px] h-[17px] bg-[#e8e8e8]" />;

const StatusBar = () => (
  <div className="h-[22px] flex items-center bg-linear-to-b from-[#505050] to-[#2e2e2e] text-[#e0e0e0] relative">
    <div className="w-[1065px]" />
    <Bar />
    <div className="w-[266px] text-center text-[12px] leading-[16px]">选择了 0 项</div>
    <Bar />
    <div className="ml-[23px] w-[143px] h-[19px] bg-white text-[#a8a8a8] text-[12px] leading-[19px] pl-[2px]">查找命令</div>
    <div className="ml-[2px] w-[20px] flex justify-center">
      <I s={15}><path d="M2 28V18c0-6 4-9 12-9V3l14 11-14 11v-6c-5 0-9 2-12 9z" fill="#e8f0fa" /></I>
    </div>
    <div className="flex items-center">
      {statusIcons.map((ic, i) => (
        <div key={i} className="w-[22px] flex justify-center">{ic}</div>
      ))}
    </div>
    <Bar />
    <div className="ml-[1px] flex items-center">
      <div className="w-[15px] h-[15px] rounded-full bg-[#5a90d8] border border-[#d0e0f0] flex items-center justify-center"><div className="w-[9px] h-[2px] bg-white" /></div>
      <div className="ml-[3px] w-[115px] h-[1px] bg-[#e8e8e8] relative">
        <div className="absolute left-[45px] -top-[7px] w-[9px] h-[14px] bg-[#a8c0e0] border border-[#d8e4f0] rounded-b-[4px]" />
      </div>
      <div className="ml-[1px] w-[15px] h-[15px] rounded-full bg-[#5a90d8] border border-[#d0e0f0] relative">
        <div className="absolute left-[2px] top-[5.500px] w-[9px] h-[2px] bg-white" />
        <div className="absolute left-[5.500px] top-[2px] w-[2px] h-[9px] bg-white" />
      </div>
    </div>
    <div className="ml-[3px]"><Bar /></div>
    <div className="ml-[5px] w-[14px] h-[15px] rounded-full bg-[#d01818] border border-[#f0a0a0]" />
    <div className="ml-[6px]"><Bar /></div>
    <div className="ml-[5px]"><I s={16}><path d="M16 2l14 14h-7v8H9v-8H2z" fill="#20c040" stroke="#0a7020" /><rect x="7" y="27" width="18" height="3" fill="#e8e8e8" /></I></div>
  </div>
);

const Taskbar = () => (
  <div className="h-[4px] flex bg-[#1c3640]">
    <div className="w-[48px]" />
    <div className="w-[343px] bg-[#f0f0f0]" />
    <div className="w-[198px]" />
    <div className="w-[48px] bg-[#4a6872]" />
    <div className="w-[148px]" />
    <div className="w-[45px] bg-[#3e5a64]" />
  </div>
);

export default function App() {
  return (
    <div className={`relative w-[1920px] h-[1044px] overflow-hidden flex flex-col bg-[#6a6a6a] ${CJK}`}>
      <TitleBar />
      <Ribbon />
      <TabStrip />
      <div className="flex-1 flex min-h-0">
        <div className="w-[5px] shrink-0 bg-[#767676] border-r border-[#555]" />
        <div className="flex-1 flex flex-col min-w-0">
          <div className="h-[3px] bg-[#c4c4c4]" />
          <div className="flex-1 relative bg-[#fdfdfd]">
            <ModelView />
            <Tree />
            <div className="absolute left-[3px] top-[723px] flex flex-col">
              <div className="w-[21px] h-[4px] bg-[#f0a850]" />
              <div className="mt-[1px] w-[116px] h-[14px] pl-[15px] flex items-center whitespace-nowrap text-[12px] leading-[14px] text-black bg-linear-to-b from-[#f4f7f9] to-[#dfe7ec] border border-[#a4b4bc]">未选择顶层零件。</div>
            </div>
          </div>
          <div className="h-[3px] bg-[#9c9c9c]" />
          <div className="h-[3px] bg-[#565656]" />
        </div>
        <div className="w-[4px] shrink-0 bg-[#a2a2a2]" />
        <SidePanel />
      </div>
      <StatusBar />
      <Taskbar />
      {/* help orb over the title bar */}
      <div className="absolute left-[1636px] top-[3px] w-[50px] h-[50px] rounded-full border-[3px] border-[#dce8f2] bg-linear-to-b from-[#3f97ef] to-[#7cc4f8] flex items-center justify-center">
        <div className="w-[36px] border-t border-dashed border-white" />
      </div>
      {/* watermark */}
      <div className="absolute left-[1815px] top-[996px] text-[21px] leading-[22px] font-bold italic text-[#f2f2f2] [-webkit-text-stroke:1px_#b4b4b4] whitespace-nowrap font-['Liberation_Sans','Noto_Sans_CJK_SC',sans-serif]">晓东 CAD</div>
      <div className="absolute left-[1815px] top-[1022px] text-[12px] leading-[14px] text-[#9a9a9a] whitespace-nowrap font-['Liberation_Sans',sans-serif]">www.xdcad.net</div>
    </div>
  );
}
